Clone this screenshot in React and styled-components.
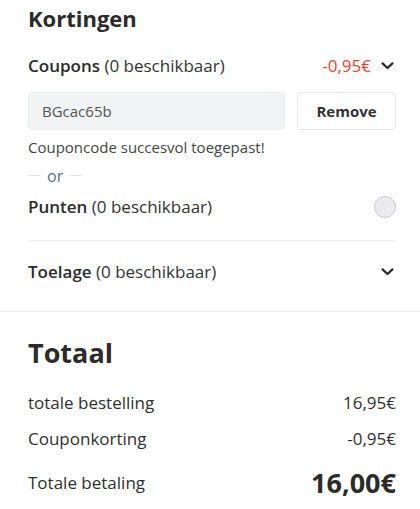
import React from 'react';
import styled, { createGlobalStyle } from 'styled-components';

const GlobalStyle = createGlobalStyle`
    body {
        margin: 0;
        font-family: "Open Sans", "Liberation Sans", sans-serif;
        color: #333;
        background: #fff;
    }
`;

const Section = styled.section`
    padding: ${props => props.$padding};
    border-bottom: ${props => props.$border ? '2px solid #f3f3f4' : 'none'};
`;

const Title = styled.h2`
    margin: 0;
    font-size: ${props => props.$size}px;
    font-weight: 700;
    line-height: 1.3;
    color: #2b2b2b;
`;

const Row = styled.div`
    display: flex;
    align-items: center;
    justify-content: space-between;
    height: ${props => props.$height}px;
    margin-top: ${props => props.$top || 0}px;
`;

const Divider = styled.hr`
    margin: ${props => props.$top}px 0 0;
    border: none;
    height: 2px;
    background: #f3f3f4;
`;

const Label = styled.div`
    font-size: 17px;
    color: #333;

    b {
        font-weight: 600;
        color: #2b2b2b;
    }
`;

const Side = styled.div`
    display: flex;
    align-items: center;
    gap: 8px;
`;

const Discount = styled.span`
    font-size: 17px;
    color: #f0412f;
`;

const CouponForm = styled.div`
    display: flex;
    gap: 12px;
    margin-top: 6px;
`;

const CodeInput = styled.div`
    flex: 1;
    height: 38px;
    box-sizing: border-box;
    padding: 0 13px;
    display: flex;
    align-items: center;
    background: #f2f3f5;
    border: 1px solid #eceef0;
    border-radius: 4px;
    font-size: 15px;
    color: #555;
`;

const RemoveButton = styled.button`
    width: 99px;
    height: 38px;
    background: #fff;
    border: 1px solid #e6e7e9;
    border-radius: 4px;
    font-family: inherit;
    font-size: 15px;
    font-weight: 700;
    color: #333;
`;

const Hint = styled.p`
    margin: 7px 0 0;
    font-size: 15px;
    line-height: 20px;
    color: #444;
`;

const Or = styled.div`
    display: flex;
    align-items: center;
    gap: 6px;
    margin-top: 9px;
    height: 20px;
    font-size: 16px;
    color: #5a6f86;

    &::before, &::after {
        content: "";
        width: 13px;
        height: 1px;
        background: #e3e3e3;
    }
`;

const Radio = styled.span`
    width: 20px;
    height: 20px;
    border-radius: 50%;
    background: #ebebf0;
    border: 1px solid #c9c9cd;
`;

const SumRow = styled.div`
    display: flex;
    align-items: center;
    justify-content: space-between;
    height: ${props => props.$height}px;
    margin-top: ${props => props.$top || 0}px;
    font-size: 17px;
    color: #2f2f2f;
`;

const BigAmount = styled.span`
    font-size: 27px;
    font-weight: 700;
    color: #2b2b2b;
`;

const Chevron = () => (
    <svg width="17" height="17" viewBox="0 0 24 24" fill="none" stroke="#2b2b2b" strokeWidth="3.2" strokeLinecap="round" strokeLinejoin="round">
        <polyline points="5 9 12 15.5 19 9" />
    </svg>
);

export default function App() {
    return (
        <>
            <GlobalStyle />
            <Section $padding="4px 24px 8px 28px" $border>
                <Title $size={22}>Kortingen</Title>
                <Row $height={40} $top={13}>
                    <Label><b>Coupons</b> (0 beschikbaar)</Label>
                    <Side>
                        <Discount>-0,95€</Discount>
                        <Chevron />
                    </Side>
                </Row>
                <CouponForm>
                    <CodeInput>BGcac65b</CodeInput>
                    <RemoveButton>Remove</RemoveButton>
                </CouponForm>
                <Hint>Couponcode succesvol toegepast!</Hint>
                <Or>or</Or>
                <Row $height={42}>
                    <Label><b>Punten</b> (0 beschikbaar)</Label>
                    <Radio />
                </Row>
                <Divider $top={12} />
                <Row $height={60}>
                    <Label><b>Toelage</b> (0 beschikbaar)</Label>
                    <Chevron />
                </Row>
            </Section>
            <Section $padding="23px 24px 0 28px">
                <Title $size={27}>Totaal</Title>
                <SumRow $height={36} $top={15}>
                    <span>totale bestelling</span>
                    <span>16,95€</span>
                </SumRow>
                <SumRow $height={35}>
                    <span>Couponkorting</span>
                    <span>-0,95€</span>
                </SumRow>
                <SumRow $height={54}>
                    <span>Totale betaling</span>
                    <BigAmount>16,00€</BigAmount>
                </SumRow>
            </Section>
        </>
    );
}
